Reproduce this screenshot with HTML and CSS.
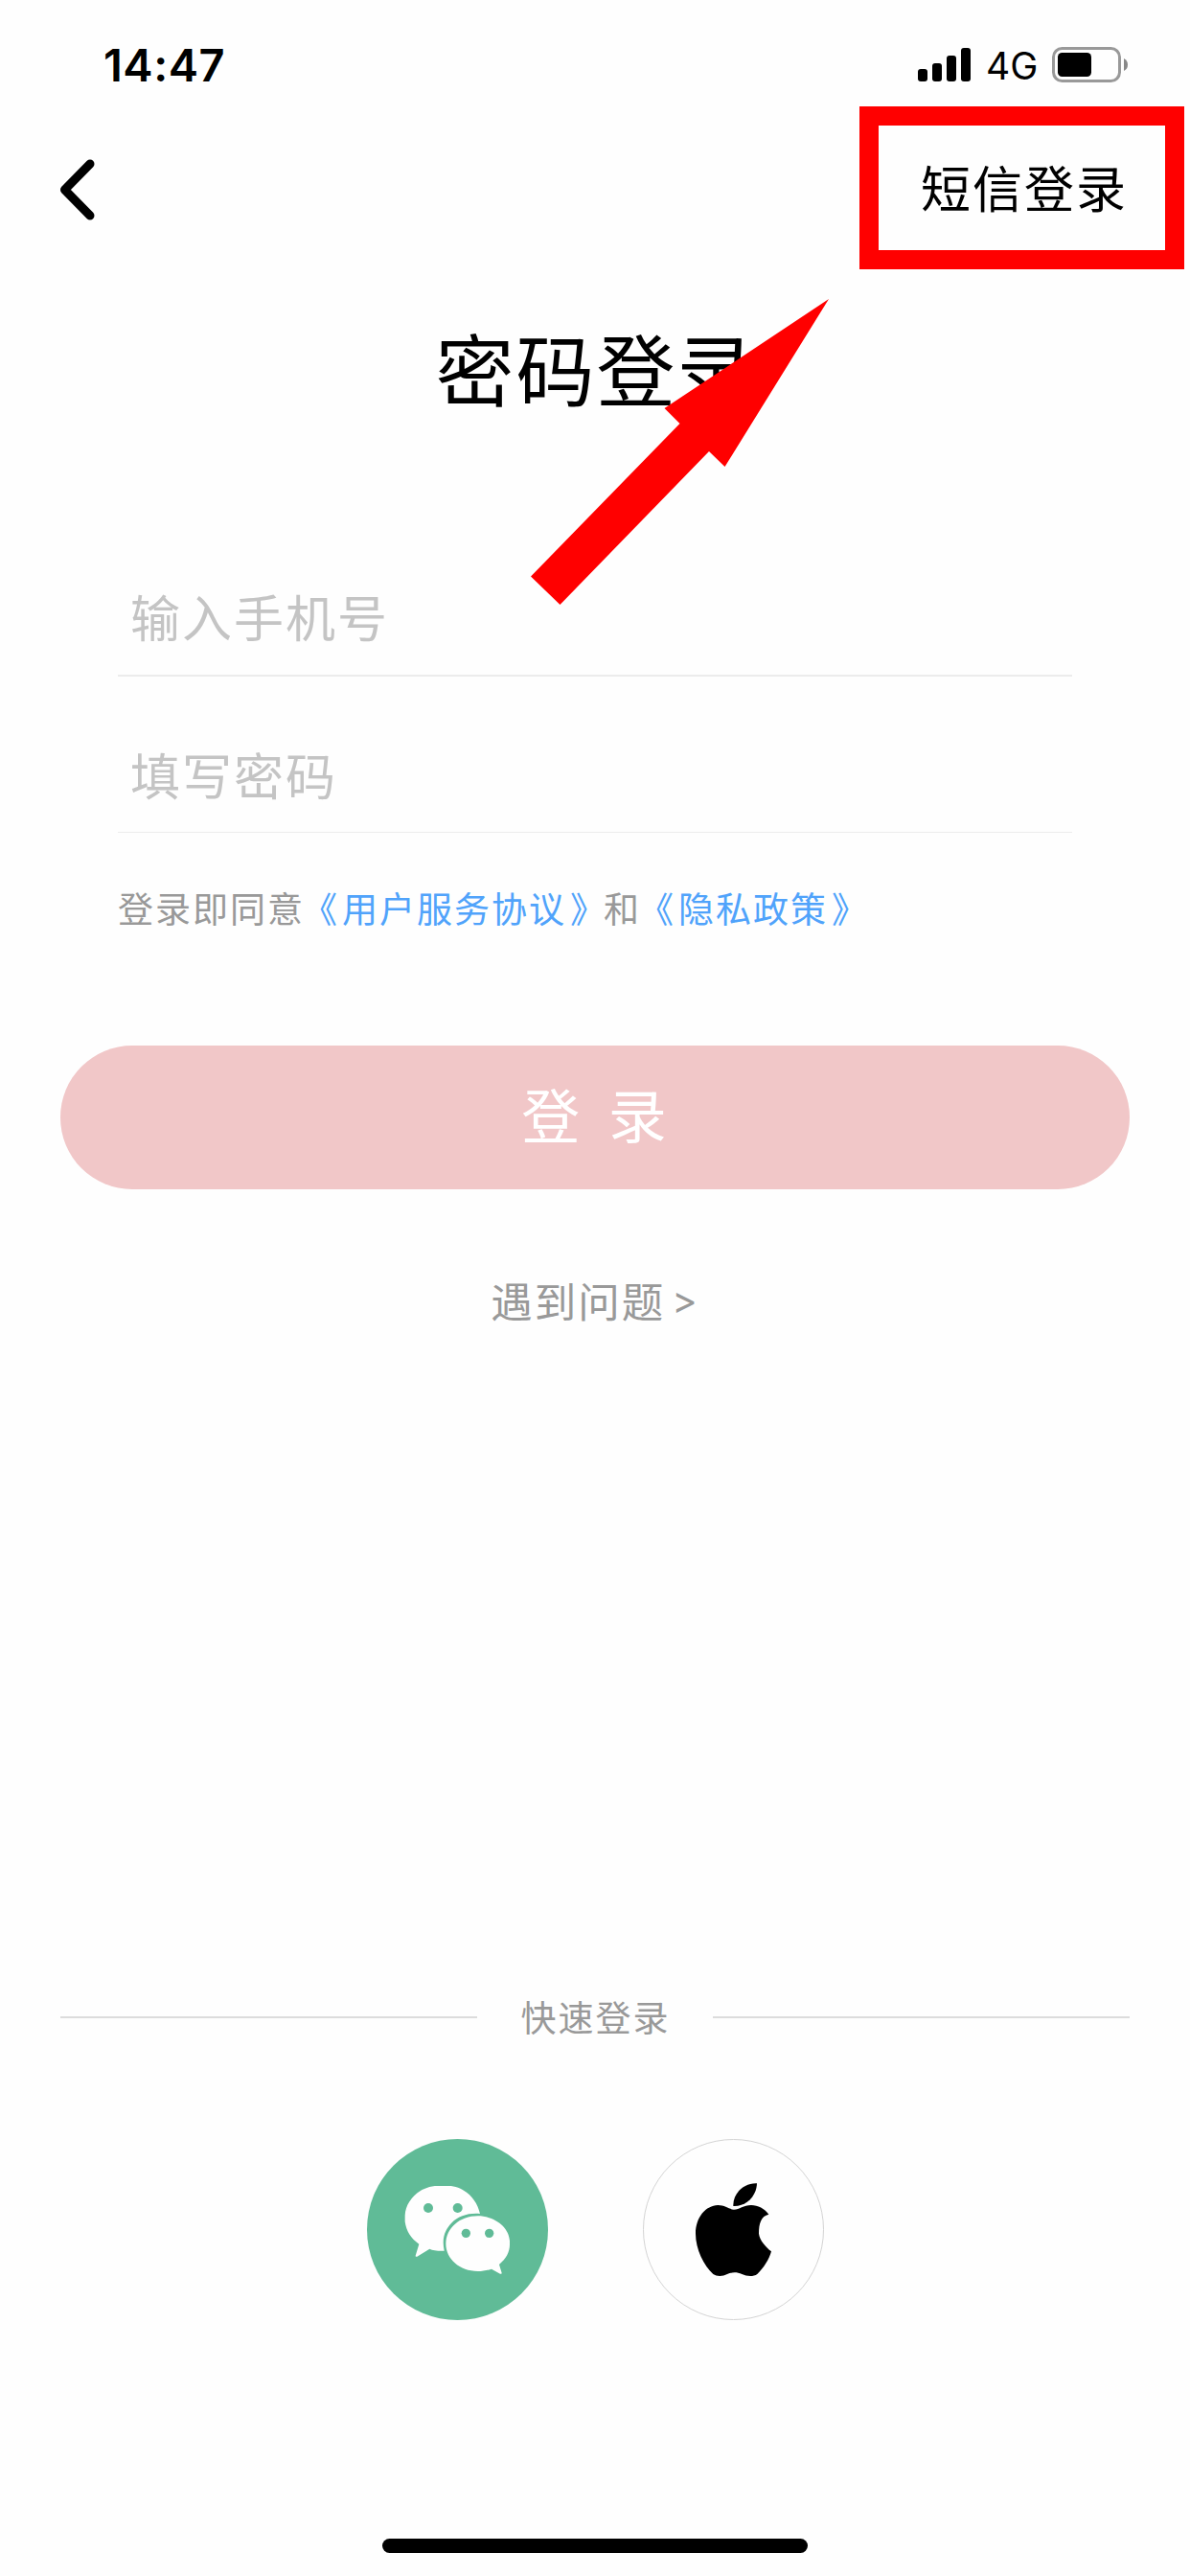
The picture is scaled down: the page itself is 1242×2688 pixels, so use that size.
FILE: index.html
```html
<!DOCTYPE html>
<html lang="zh-CN">
<head>
  <meta charset="UTF-8">
  <title>密码登录</title>
  <link rel="stylesheet" href="styles.css">
</head>
<body>
  <div class="statusbar">
    <span class="time">14:47</span>
    <div class="status-icons">
      <svg class="signal" viewBox="0 0 55 35">
        <rect x="0" y="22" width="10" height="13" rx="3"/>
        <rect x="15" y="16" width="10" height="19" rx="3"/>
        <rect x="30" y="8" width="10" height="27" rx="3"/>
        <rect x="45" y="0" width="10" height="35" rx="3"/>
      </svg>
      <span class="network">4G</span>
      <svg class="battery" viewBox="0 0 79 37">
        <rect x="1.5" y="1.5" width="69" height="34" rx="9" fill="none" stroke="#999" stroke-width="3"/>
        <rect x="6" y="6" width="35" height="25" rx="4.5"/>
        <path d="M75 12 Q79 14 79 18.500 Q79 23 75 25 Z" fill="#888"/>
      </svg>
    </div>
  </div>

  <div class="nav">
    <svg class="back" viewBox="0 0 38 64">
      <path d="M33 5 L6.500 32 L33 59" fill="none" stroke="#000" stroke-width="9" stroke-linecap="round" stroke-linejoin="round"/>
    </svg>
    <a class="sms">短信登录</a>
  </div>

  <h1>密码登录</h1>

  <form class="login">
    <div class="fields">
      <input class="field phone" type="text" placeholder="输入手机号">
      <input class="field" type="text" placeholder="填写密码">
      <p class="agree">登录即同意<a><span class="open">《</span>用户服务协议<span class="close">》</span></a>和<a><span class="open">《</span>隐私政策<span class="close">》</span></a></p>
    </div>
    <button type="button">登 录</button>
  </form>

  <a class="help">遇到问题<span>&gt;</span></a>

  <div class="quick">
    <span>快速登录</span>
  </div>

  <div class="social">
    <a class="round wechat">
      <svg viewBox="69 66 567 567">
        <path fill="#fefefe" d="M423 300 C412 248 367 213 325 213 H290 C235 213 190 258 188 305 V325 C192 354 207 378 232 395 L221 431 Q221 436 226 434 L265 410 Q280 417 311 416 C302 374 315 348 335 328 C355 307 386 297 423 300 Z"/>
        <path fill="#fefefe" d="M516 385 C514 343 470 307 416 307 C360 307 316 345 316 394 C316 442 360 480 416 480 C432 480 446 477 459 473 L486 488 Q492 490 491 485 L483 459 C505 441 516 420 516 397 Z"/>
        <circle cx="261" cy="282" r="15"/>
        <circle cx="353" cy="282" r="15"/>
        <circle cx="379" cy="361" r="14"/>
        <circle cx="452" cy="361" r="14"/>
      </svg>
    </a>
    <a class="round apple">
      <svg viewBox="933 66 567 567">
        <path d="M1216 276 C1214 237 1249 203 1290 205 C1289 245 1256 278 1216 276 Z"/>
        <path d="M1218 287 C1203 286 1190 273 1168 273 C1130 274 1098 311 1098 362 C1098 411 1124 462 1153 489 C1165 497 1183 496 1197 489 C1212 482 1228 482 1243 489 C1258 496 1278 498 1291 489 C1310 471 1329 442 1335 418 C1316 402 1299 384 1296 362 C1296 330 1303 307 1327 302 C1314 284 1293 273 1272 273 C1248 273 1235 287 1218 287 Z"/>
      </svg>
    </a>
  </div>

  <div class="home-bar"></div>

  <svg class="arrow" viewBox="554 312 311 320">
    <path d="M865 312 L756.500 487 L740 471 L584.500 631 L554 601.500 L709.500 442 L693.500 426 Z"/>
  </svg>
</body>
</html>
```
FILE: styles.css
```css
* {
  box-sizing: border-box;
}

body {
  position: relative;
  display: flex;
  flex-direction: column;
  width: 1242px;
  height: 2688px;
  margin: 0;
  background-color: #fefefe;
  color: #000;
  font-family: "Noto Sans CJK SC", "Liberation Sans", sans-serif;
  letter-spacing: 2px;
  overflow: hidden;
}

svg {
  display: block;
}

.statusbar {
  display: flex;
  justify-content: space-between;
  height: 111px;
  padding: 49px 65px 0 108px;
  font-family: Inter, sans-serif;
}

.time {
  font-size: 47px;
  font-weight: 600;
  line-height: 38px;
  letter-spacing: 0.5px;
}

.status-icons {
  display: flex;
  align-items: flex-start;
}

.signal {
  width: 55px;
  height: 35px;
  margin: 1px 16px 0 0;
}

.network {
  width: 69px;
  font-size: 39px;
  line-height: 40px;
  letter-spacing: 0;
}

.battery {
  width: 79px;
  height: 37px;
}

.nav {
  display: flex;
  align-items: center;
  justify-content: space-between;
  height: 170px;
  padding: 0 6px 0 61px;
}

.back {
  width: 38px;
  height: 64px;
  margin-top: 3px;
}

.sms {
  width: 339px;
  height: 170px;
  padding-left: 44px;
  border: 20px solid #f00;
  font-size: 52px;
  line-height: 128px;
}

h1 {
  margin: 41px 0 0;
  padding-left: 3px;
  font-size: 82px;
  font-weight: 400;
  line-height: 121px;
  text-align: center;
}

.login {
  margin-top: 137px;
}

.fields {
  padding: 0 123px;
}

.field {
  display: block;
  width: 100%;
  height: 123px;
  margin: 40px 0 0;
  padding: 1px 13px 0;
  border: none;
  border-bottom: 1px solid #ececec;
  background: none;
  font: inherit;
  font-size: 52px;
  letter-spacing: 2px;
}

.phone {
  height: 126px;
  margin-top: 0;
  border-bottom-width: 2px;
}

.field::placeholder {
  color: #c4c4c4;
}

.agree {
  margin: 53px 0 0;
  color: #999;
  font-size: 37px;
  line-height: 50px;
}

.agree a {
  color: #50a3fb;
}

.agree .open {
  margin: 0 3px 0 -3px;
}

.agree .close {
  margin: 0 -4px 0 4px;
}

button {
  display: block;
  width: 1116px;
  height: 150px;
  margin: 119px auto 0;
  padding: 0 0 9px 6px;
  border: none;
  border-radius: 75px;
  background-color: #f1c7c8;
  color: #fff;
  font: inherit;
  font-size: 61px;
  line-height: 100px;
  letter-spacing: 8px;
}

.help {
  display: flex;
  justify-content: center;
  gap: 7px;
  height: 60px;
  margin-top: 86px;
  color: #999;
  font-size: 43.5px;
  line-height: 60px;
}

.help span {
  font-family: Inter, sans-serif;
  font-size: 40px;
}

.quick {
  display: flex;
  align-items: center;
  justify-content: space-between;
  height: 60px;
  margin-top: 688px;
  padding: 0 63px;
  color: #999;
  font-size: 37px;
  line-height: 60px;
}

.quick span {
  padding: 0 0 3px 1px;
}

.quick::before,
.quick::after {
  content: "";
  width: 435px;
  height: 2px;
  background-color: #dcdcdc;
}

.social {
  display: flex;
  justify-content: center;
  gap: 99px;
  margin-top: 97px;
}

.round {
  width: 189px;
  height: 189px;
  border-radius: 50%;
}

.round svg {
  width: 189px;
  height: 189px;
}

.wechat {
  background-color: #60bb97;
  fill: #60bb97;
}

.apple {
  border: 1px solid #d4d4d4;
}

.apple svg {
  margin: -1px;
}

.home-bar {
  width: 444px;
  height: 15px;
  margin: 228px auto 0;
  border-radius: 8px;
  background-color: #000;
}

/* red pointer laid over the title */
.arrow {
  position: absolute;
  left: 554px;
  top: 312px;
  width: 311px;
  height: 320px;
  fill: #f00;
}
```
